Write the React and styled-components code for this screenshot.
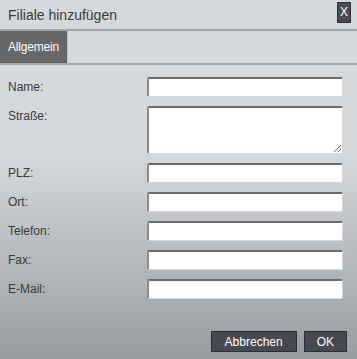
import React from "react";
import styled, { createGlobalStyle } from "styled-components";

const Global = createGlobalStyle`
  html, body { margin: 0; padding: 0; }
  body {
    width: 357px;
    height: 359px;
    overflow: hidden;
    font-family: "Liberation Sans", Arial, sans-serif;
  }
`;

const Dialog = styled.div`
  width: 357px;
  height: 359px;
  display: flex;
  flex-direction: column;
  background: linear-gradient(to bottom, #d6d9dc 0px, #d6d9dc 150px, #a9aeb2 300px, #979ca1 359px);
  color: #333;
`;

const TitleBar = styled.div`
  display: flex;
  align-items: center;
  justify-content: space-between;
  padding: 0 6px 0 8px;
  border-bottom: 2px solid #a3a6a9;
  box-sizing: border-box;
  height: 31px;
`;

const Title = styled.div`
  font-size: 14px;
  color: #3a3a3a;
`;

const CloseButton = styled.button`
  width: 14px;
  height: 21px;
  padding: 0;
  border: 1px solid #2f3037;
  background: #4a4b55;
  color: #fff;
  font-family: "Liberation Sans", Arial, sans-serif;
  font-size: 12px;
  line-height: 19px;
  text-align: center;
  margin-top: -4px;
`;

const TabBar = styled.div`
  height: 32px;
  display: flex;
  border-bottom: 2px solid #a3a6a9;
`;

const Tab = styled.div`
  display: flex;
  align-items: center;
  padding: 0 8px;
  width: 68px;
  box-sizing: border-box;
  background: ${(p) => (p.active ? "#676769" : "transparent")};
  color: ${(p) => (p.active ? "#fff" : "#333")};
  font-size: 12px;
  letter-spacing: -0.2px;
  border-right: 1px solid #bfc2c5;
`;

const Form = styled.div`
  display: grid;
  grid-template-columns: 139px 196px;
  row-gap: 9px;
  padding: 12px 0 0 8px;
`;

const Label = styled.label`
  font-size: 12px;
  color: #3a3a3a;
  padding-top: ${(p) => (p.top ? "3px" : "0")};
  align-self: ${(p) => (p.top ? "start" : "center")};
`;

const Input = styled.input`
  height: 20px;
  box-sizing: border-box;
  border: 1px solid #d8d8d8;
  border-top: 2px solid #6b6b6b;
  border-left: 2px solid #8a8a8a;
  border-radius: 2px;
  background: #fff;
  margin: 0;
  padding: 0 3px;
`;

const TextArea = styled.textarea`
  height: 48px;
  box-sizing: border-box;
  border: 1px solid #d8d8d8;
  border-top: 2px solid #6b6b6b;
  border-left: 2px solid #8a8a8a;
  border-radius: 2px;
  background: #fff;
  margin: 0;
  resize: both;
`;

const Footer = styled.div`
  margin-top: auto;
  display: flex;
  justify-content: flex-end;
  gap: 7px;
  padding: 0 10px 7px 0;
`;

const Button = styled.button`
  height: 21px;
  padding: 0 ${(p) => (p.wide ? "13px" : "12px")};
  border: 1px solid #2c2d33;
  background: #474851;
  color: #fff;
  font-family: "Liberation Sans", Arial, sans-serif;
  font-size: 12px;
`;

const fields = [
  { label: "Name:" },
  { label: "Straße:", area: true },
  { label: "PLZ:" },
  { label: "Ort:" },
  { label: "Telefon:" },
  { label: "Fax:" },
  { label: "E-Mail:" },
];

export default function App() {
  return (
    <>
      <Global />
      <Dialog>
        <TitleBar>
          <Title>Filiale hinzufügen</Title>
          <CloseButton>X</CloseButton>
        </TitleBar>
        <TabBar>
          <Tab active>Allgemein</Tab>
        </TabBar>
        <Form>
          {fields.map((f) => (
            <React.Fragment key={f.label}>
              <Label top={f.area}>{f.label}</Label>
              {f.area ? <TextArea /> : <Input />}
            </React.Fragment>
          ))}
        </Form>
        <Footer>
          <Button wide>Abbrechen</Button>
          <Button>OK</Button>
        </Footer>
      </Dialog>
    </>
  );
}
